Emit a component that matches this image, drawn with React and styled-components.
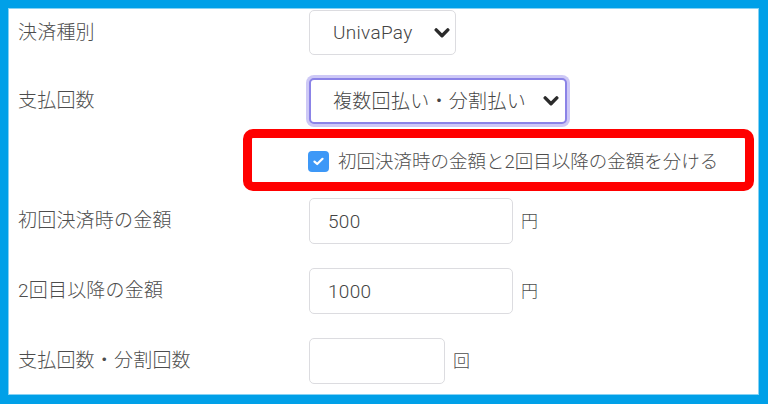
import React from "react";
import styled, { createGlobalStyle } from "styled-components";

const FONT = `"Roboto", "Noto Sans CJK JP", sans-serif`;

const GlobalStyle = createGlobalStyle`
  html, body {
    margin: 0;
    padding: 0;
    background: #00a0e8;
  }
  body {
    font-family: ${FONT};
    font-weight: 300;
    color: #4d4d4d;
  }
`;

const Frame = styled.div`
  box-sizing: border-box;
  width: 768px;
  height: 404px;
  padding: 8px 9px 9px 8px;
  background: #00a0e8;
`;

const Panel = styled.div`
  box-sizing: border-box;
  height: 100%;
  background: #fff;
  border: 1px solid #86d2f4;
  padding: 1px 0 0 9px;
  display: flex;
  flex-direction: column;
`;

const Row = styled.div`
  display: grid;
  grid-template-columns: 291px auto;
  align-items: center;
  margin-top: ${(p) => p.$mt || 0}px;
`;

const Label = styled.div`
  font-size: 19px;
  line-height: 24px;
  letter-spacing: 0.2px;
`;

const Field = styled.div`
  display: flex;
  align-items: center;
`;

const SelectWrap = styled.div`
  position: relative;
  box-sizing: border-box;
  width: ${(p) => p.$w}px;
  height: ${(p) => (p.$focused ? 46 : 45)}px;
  border-radius: 5px;
  border: ${(p) => (p.$focused ? "2px solid #8b83e7" : "1px solid #dcdce0")};
  box-shadow: ${(p) => (p.$focused ? "0 0 0 3px #cdc8f6" : "none")};
  background: #fff;
`;

const Select = styled.select`
  appearance: none;
  -webkit-appearance: none;
  box-sizing: border-box;
  width: 100%;
  height: 100%;
  border: none;
  outline: none;
  background: transparent;
  font-family: ${FONT};
  font-weight: 300;
  font-size: 19px;
  letter-spacing: 0.3px;
  color: #444;
  padding: 0 0 0 ${(p) => p.$pl}px;
  margin: 0;
`;

const Chevron = styled.span`
  position: absolute;
  top: 50%;
  right: ${(p) => p.$r}px;
  transform: translateY(-50%);
  display: flex;
  pointer-events: none;
`;

const Input = styled.input`
  box-sizing: border-box;
  width: ${(p) => p.$w}px;
  height: 46px;
  border: 1px solid #dcdce0;
  border-radius: 5px;
  padding: 0 0 0 18px;
  font-family: ${FONT};
  font-weight: 300;
  font-size: 19px;
  letter-spacing: 0.3px;
  color: #444;
  outline: none;
  margin: 0;
`;

const Unit = styled.span`
  margin-left: 8px;
  font-size: 17px;
  line-height: 24px;
`;

const Highlight = styled.div`
  box-sizing: border-box;
  margin-top: 5px;
  margin-left: 225px;
  width: 511px;
  height: 62px;
  border: 9px solid #ff0000;
  border-radius: 10px;
  padding: 3px 0 0 56px;
  display: flex;
  align-items: center;
`;

const CheckBox = styled.span`
  box-sizing: border-box;
  width: 21px;
  height: 21px;
  border-radius: 4px;
  background: #3d98f7;
  display: inline-flex;
  align-items: center;
  justify-content: center;
  flex-shrink: 0;
`;

const CheckText = styled.span`
  margin-left: 9px;
  font-size: 18.5px;
  line-height: 24px;
`;

const ChevronIcon = () => (
  <svg width="16" height="11" viewBox="0 0 16 11">
    <path
      d="M2.2 2.4 L8 8.2 L13.8 2.4"
      fill="none"
      stroke="#2b2b2b"
      strokeWidth="3.4"
      strokeLinecap="round"
      strokeLinejoin="round"
    />
  </svg>
);

const SelectField = ({ w, focused, value, options, right }) => (
  <SelectWrap $w={w} $focused={focused}>
    <Select $pl={focused ? 22 : 23} defaultValue={value}>
      {options.map((o) => (
        <option key={o}>{o}</option>
      ))}
    </Select>
    <Chevron $r={right}>
      <ChevronIcon />
    </Chevron>
  </SelectWrap>
);

export default function App() {
  return (
    <Frame>
      <GlobalStyle />
      <Panel>
        <Row>
          <Label>決済種別</Label>
          <Field>
            <SelectField w={147} value="UnivaPay" options={["UnivaPay"]} right={5} />
          </Field>
        </Row>
        <Row $mt={23}>
          <Label>支払回数</Label>
          <Field>
            <SelectField
              w={258}
              focused
              value="複数回払い・分割払い"
              options={["一括払い", "複数回払い・分割払い"]}
              right={6}
            />
          </Field>
        </Row>
        <Highlight>
          <CheckBox>
            <svg width="11" height="9" viewBox="0 0 11 9">
              <path
                d="M1.5 4.6 L4.2 7 L9.5 1.8"
                fill="none"
                stroke="#fff"
                strokeWidth="2.2"
                strokeLinecap="round"
                strokeLinejoin="round"
              />
            </svg>
          </CheckBox>
          <CheckText>初回決済時の金額と2回目以降の金額を分ける</CheckText>
        </Highlight>
        <Row $mt={7}>
          <Label>初回決済時の金額</Label>
          <Field>
            <Input $w={204} defaultValue="500" />
            <Unit>円</Unit>
          </Field>
        </Row>
        <Row $mt={24}>
          <Label>2回目以降の金額</Label>
          <Field>
            <Input $w={204} defaultValue="1000" />
            <Unit>円</Unit>
          </Field>
        </Row>
        <Row $mt={24}>
          <Label>支払回数・分割回数</Label>
          <Field>
            <Input $w={136} defaultValue="" />
            <Unit>回</Unit>
          </Field>
        </Row>
      </Panel>
    </Frame>
  );
}
